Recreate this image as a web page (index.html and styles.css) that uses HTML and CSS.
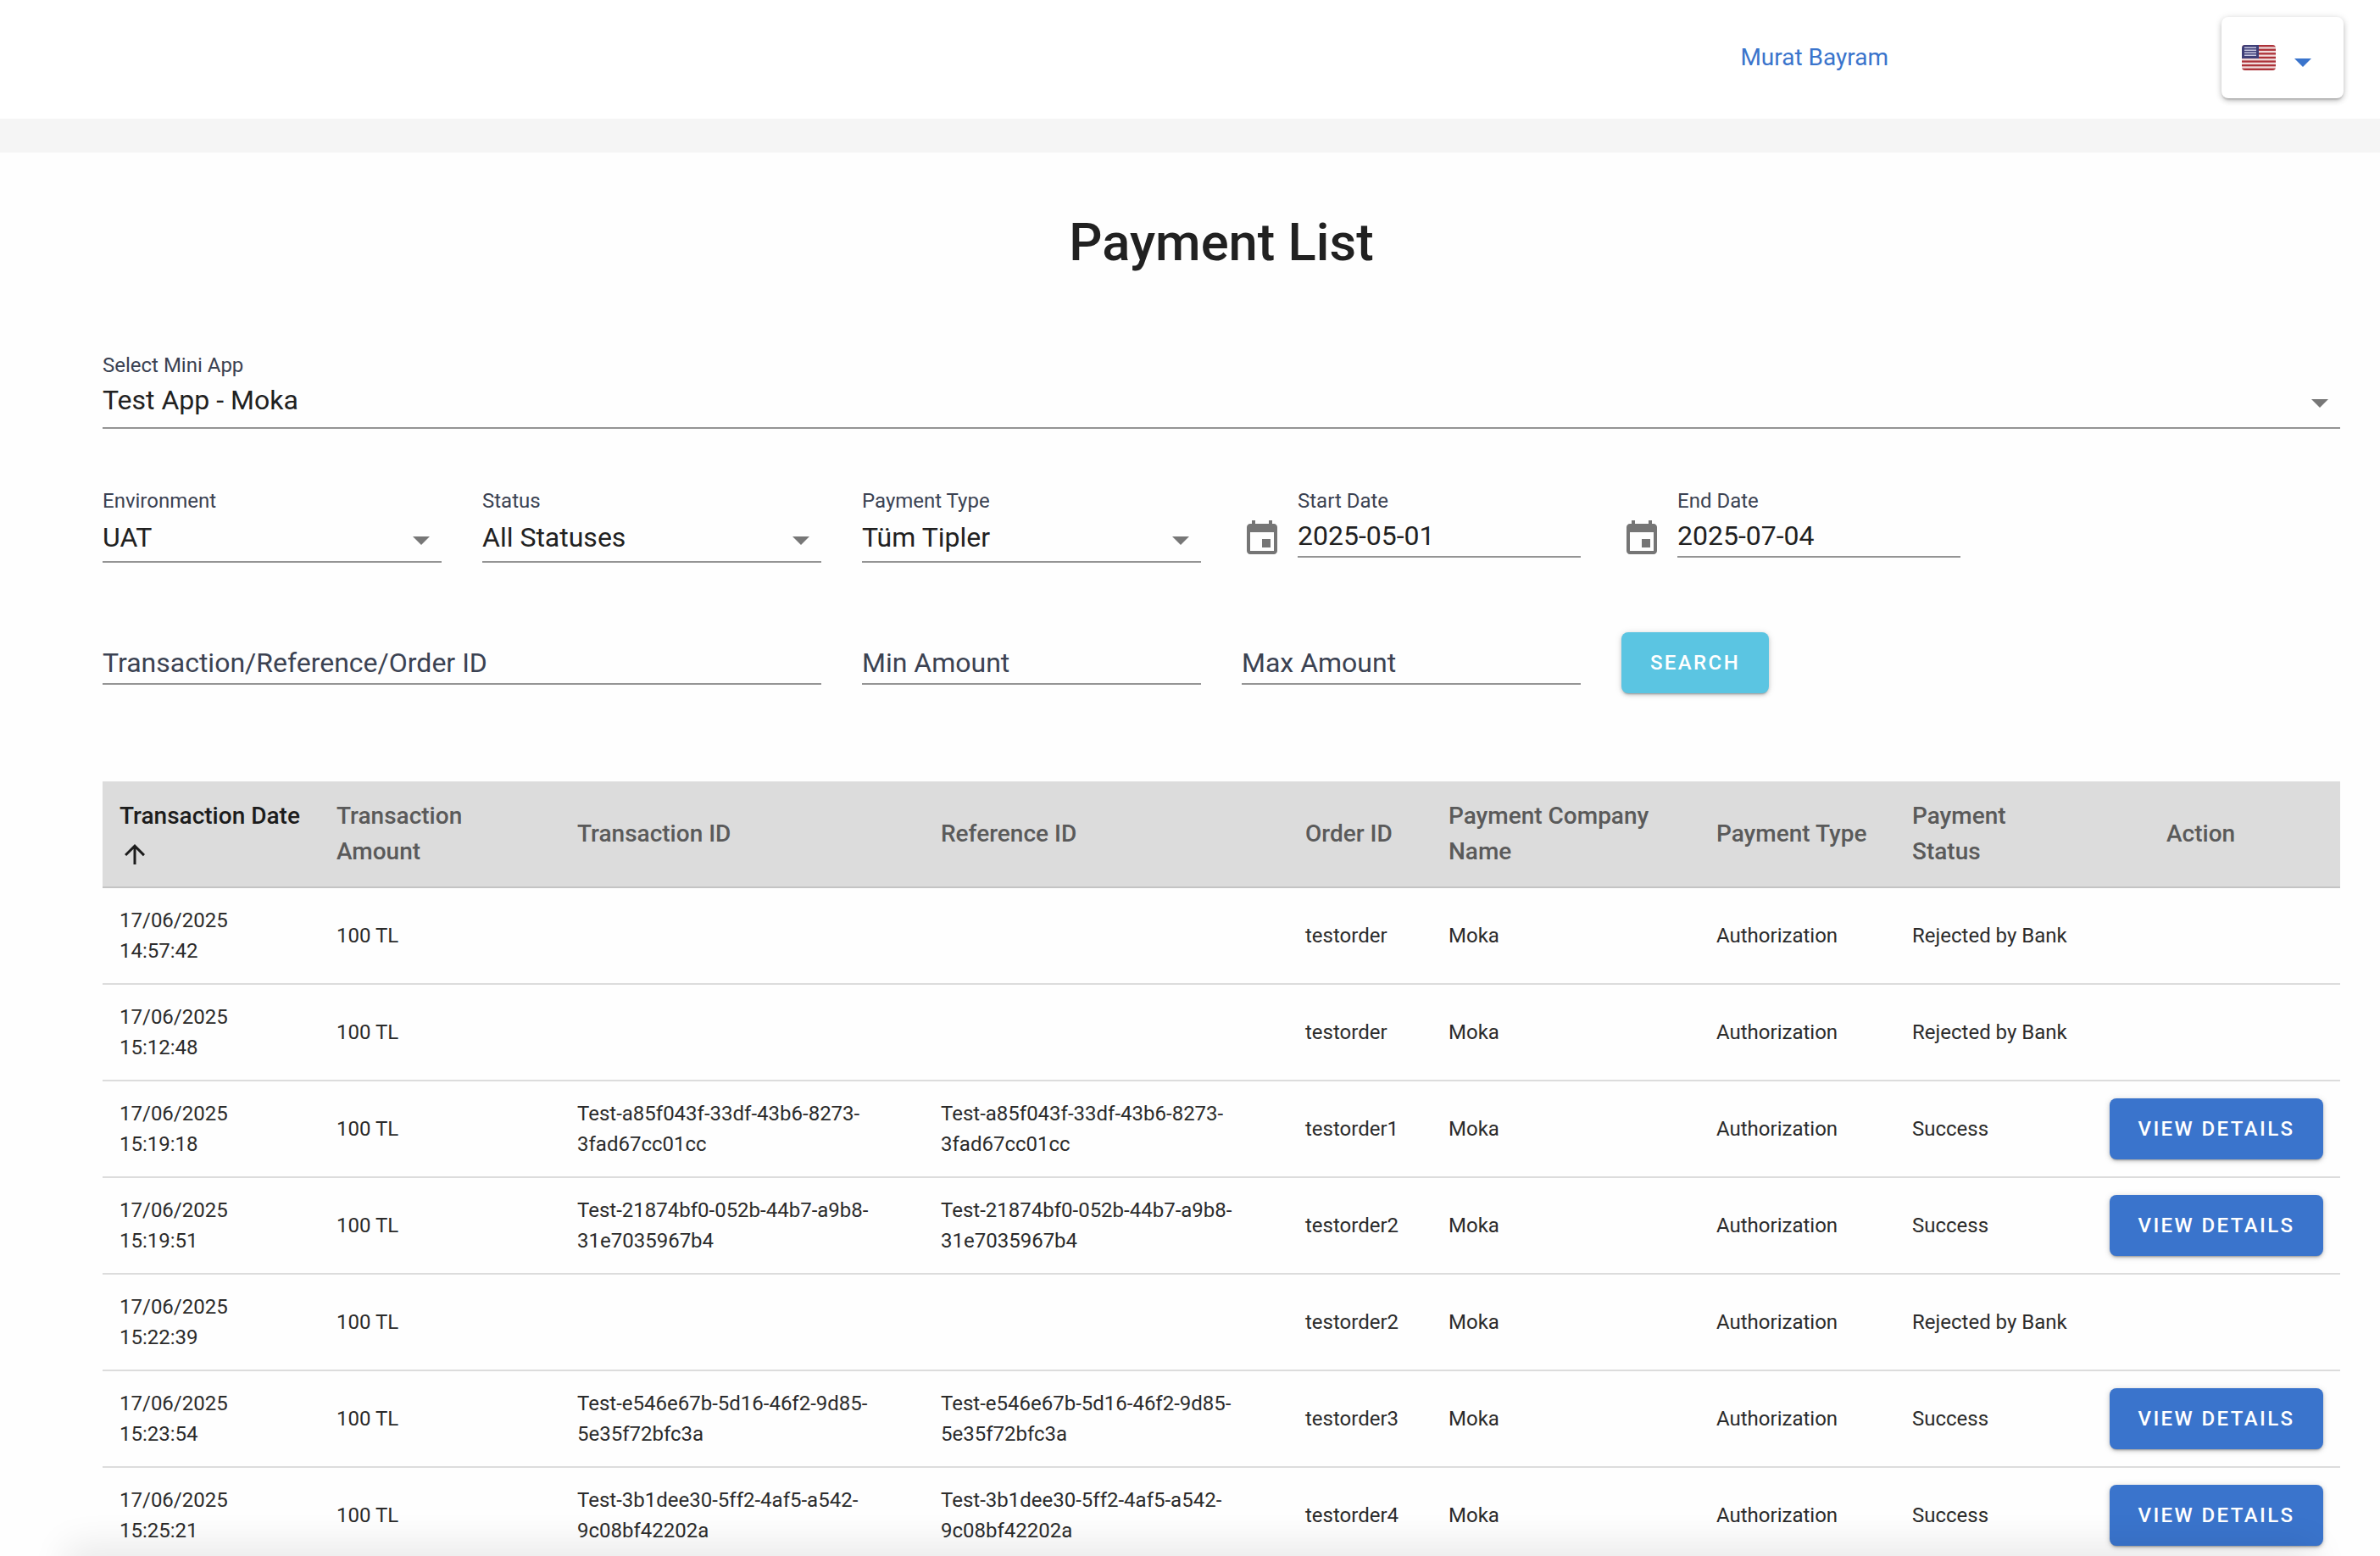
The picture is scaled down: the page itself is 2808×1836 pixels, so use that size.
FILE: index.html
```html
<!DOCTYPE html>
<html lang="en">
<head>
<meta charset="utf-8">
<title>Payment List</title>
<link rel="stylesheet" href="styles.css">
</head>
<body>
<header class="topbar">
  <a class="user-name">Murat Bayram</a>
  <div class="lang-card">
    <svg class="flag" viewBox="0 0 40 30" aria-hidden="true">
      <defs><clipPath id="flagclip"><rect y="0" width="40" height="30" rx="4"/></clipPath></defs>
      <g clip-path="url(#flagclip)">
        <rect width="40" height="30" fill="#f0dcdc"/>
        <g fill="#ad3239">
          <rect y="0" width="40" height="2.300"/><rect y="4.600" width="40" height="2.300"/><rect y="9.200" width="40" height="2.300"/><rect y="13.800" width="40" height="2.300"/><rect y="18.400" width="40" height="2.300"/><rect y="23" width="40" height="2.300"/><rect y="27.600" width="40" height="2.400"/>
        </g>
        <rect width="20" height="16" fill="#3f3f78"/>
        <g fill="#c8c8e0">
          <rect x="3" y="2.500" width="14" height="1.500"/><rect x="3" y="5.500" width="14" height="1.500"/><rect x="3" y="8.500" width="14" height="1.500"/><rect x="3" y="11.500" width="14" height="1.500"/>
        </g>
      </g>
    </svg>
    <svg class="lang-caret" viewBox="0 0 20 10" aria-hidden="true"><path d="M0 0h20L10 10z"/></svg>
  </div>
</header>
<div class="band"></div>
<main class="content">
  <h1 class="title">Payment List</h1>

  <div class="field field-app">
    <label class="lbl">Select Mini App</label>
    <div class="select-value"><span>Test App - Moka</span><svg class="caret" viewBox="0 0 20 10"><path d="M0 0h20L10 10z"/></svg></div>
  </div>

  <div class="filters">
    <div class="field"><label class="lbl">Environment</label><div class="select-value"><span>UAT</span><svg class="caret" viewBox="0 0 20 10"><path d="M0 0h20L10 10z"/></svg></div></div>
    <div class="field"><label class="lbl">Status</label><div class="select-value"><span>All Statuses</span><svg class="caret" viewBox="0 0 20 10"><path d="M0 0h20L10 10z"/></svg></div></div>
    <div class="field"><label class="lbl">Payment Type</label><div class="select-value"><span>Tüm Tipler</span><svg class="caret" viewBox="0 0 20 10"><path d="M0 0h20L10 10z"/></svg></div></div>
    <div class="date-field">
      <svg class="cal" viewBox="3 1 18 20"><path d="M17 12h-5v5h5v-5zM16 1v2H8V1H6v2H5c-1.110 0-1.990.9-1.990 2L3 19c0 1.100.89 2 2 2h14c1.100 0 2-.9 2-2V5c0-1.100-.9-2-2-2h-1V1h-2zm3 18H5V8h14v11z"/></svg>
      <div class="field date-input"><label class="lbl">Start Date</label><div class="date-value">2025-05-01</div></div>
    </div>
    <div class="date-field">
      <svg class="cal" viewBox="3 1 18 20"><path d="M17 12h-5v5h5v-5zM16 1v2H8V1H6v2H5c-1.110 0-1.990.9-1.990 2L3 19c0 1.100.89 2 2 2h14c1.100 0 2-.9 2-2V5c0-1.100-.9-2-2-2h-1V1h-2zm3 18H5V8h14v11z"/></svg>
      <div class="field date-input"><label class="lbl">End Date</label><div class="date-value">2025-07-04</div></div>
    </div>
  </div>

  <div class="search-row">
    <div class="text-input">Transaction/Reference/Order ID</div>
    <div class="text-input">Min Amount</div>
    <div class="text-input">Max Amount</div>
    <button class="btn btn-search">SEARCH</button>
  </div>

  <table class="grid">
    <colgroup>
      <col class="c1"><col class="c2"><col class="c3"><col class="c4"><col class="c5"><col class="c6"><col class="c7"><col class="c8"><col class="c9">
    </colgroup>
    <thead>
      <tr>
        <th class="sorted">Transaction Date<svg class="arrow" viewBox="0 0 24 24"><path d="M4 12l1.410 1.410L11 7.830V20h2V7.830l5.580 5.590L20 12l-8-8-8 8z"/></svg></th>
        <th>Transaction Amount</th>
        <th>Transaction ID</th>
        <th>Reference ID</th>
        <th>Order ID</th>
        <th>Payment Company Name</th>
        <th>Payment Type</th>
        <th>Payment Status</th>
        <th class="action-head">Action</th>
      </tr>
    </thead>
    <tbody>
      <tr><td>17/06/2025<br>14:57:42</td><td>100 TL</td><td></td><td></td><td>testorder</td><td>Moka</td><td>Authorization</td><td>Rejected by Bank</td><td></td></tr>
      <tr><td>17/06/2025<br>15:12:48</td><td>100 TL</td><td></td><td></td><td>testorder</td><td>Moka</td><td>Authorization</td><td>Rejected by Bank</td><td></td></tr>
      <tr><td>17/06/2025<br>15:19:18</td><td>100 TL</td><td>Test-a85f043f-33df-43b6-8273-<br>3fad67cc01cc</td><td>Test-a85f043f-33df-43b6-8273-<br>3fad67cc01cc</td><td>testorder1</td><td>Moka</td><td>Authorization</td><td>Success</td><td><button class="btn btn-view">VIEW DETAILS</button></td></tr>
      <tr><td>17/06/2025<br>15:19:51</td><td>100 TL</td><td>Test-21874bf0-052b-44b7-a9b8-<br>31e7035967b4</td><td>Test-21874bf0-052b-44b7-a9b8-<br>31e7035967b4</td><td>testorder2</td><td>Moka</td><td>Authorization</td><td>Success</td><td><button class="btn btn-view">VIEW DETAILS</button></td></tr>
      <tr><td>17/06/2025<br>15:22:39</td><td>100 TL</td><td></td><td></td><td>testorder2</td><td>Moka</td><td>Authorization</td><td>Rejected by Bank</td><td></td></tr>
      <tr><td>17/06/2025<br>15:23:54</td><td>100 TL</td><td>Test-e546e67b-5d16-46f2-9d85-<br>5e35f72bfc3a</td><td>Test-e546e67b-5d16-46f2-9d85-<br>5e35f72bfc3a</td><td>testorder3</td><td>Moka</td><td>Authorization</td><td>Success</td><td><button class="btn btn-view">VIEW DETAILS</button></td></tr>
      <tr><td>17/06/2025<br>15:25:21</td><td>100 TL</td><td>Test-3b1dee30-5ff2-4af5-a542-<br>9c08bf42202a</td><td>Test-3b1dee30-5ff2-4af5-a542-<br>9c08bf42202a</td><td>testorder4</td><td>Moka</td><td>Authorization</td><td>Success</td><td><button class="btn btn-view">VIEW DETAILS</button></td></tr>
    </tbody>
  </table>
</main>
<div class="bottom-fade"></div>
</body>
</html>
```
FILE: styles.css
```css
* { box-sizing: border-box; }
html, body { margin: 0; height: 100%; overflow: hidden; }
body {
  font-family: Roboto, "Liberation Sans", sans-serif;
  background: #fefefe;
  color: #1f1f1f;
  height: 1836px;
  position: relative;
}
.topbar {
  height: 140px;
  background: #fff;
  display: flex;
  align-items: flex-start;
  justify-content: flex-end;
  padding: 20px 43px 0 0;
}
.user-name {
  font-size: 28px;
  line-height: 36px;
  color: #3a74cc;
  margin: 30px 393px 0 0;
}
.lang-card {
  width: 144px;
  height: 96px;
  background: #fff;
  border-radius: 8px;
  box-shadow: 0 3px 3px -2px rgba(0,0,0,.3), 0 3px 6px 0 rgba(0,0,0,.16), 0 1px 10px 0 rgba(0,0,0,.12);
  display: flex;
  align-items: flex-start;
  padding: 33px 0 0 24px;
}
.flag { width: 40px; height: 30px; display: block; }
.lang-caret { width: 20px; height: 10px; margin: 16px 0 0 22px; fill: #3a74cc; }
.band { height: 40px; background: #f5f5f5; }
.content { padding: 0 47px 0 121px; }
.title {
  margin: 0;
  padding-top: 66px;
  height: 180px;
  text-align: center;
  font-size: 61.500px;
  line-height: 80px;
  font-weight: 500;
  color: #212121;
}
.field { display: flex; flex-direction: column; }
.lbl { font-size: 24px; line-height: 28px; color: #3b4252; }
.select-value {
  display: flex;
  align-items: center;
  justify-content: space-between;
  height: 59px;
  font-size: 32px;
  color: #212121;
  border-bottom: 2px solid #949494;
}
.field-app { margin-top: 57px; }
.field-app .select-value { height: 61px; padding-bottom: 5px; }
.caret { width: 20px; height: 10px; fill: #777; margin: 8px 14px 0 0; }
.filters {
  display: grid;
  grid-template-columns: repeat(5, 400px);
  column-gap: 48px;
  margin-top: 71px;
  align-items: start;
}
.date-field { display: flex; align-items: flex-start; gap: 24px; }
.cal { width: 36px; height: 40px; fill: #757575; flex: none; margin: 37px 0 0 6px; }
.date-input { flex: 1; }
.date-value {
  height: 53px;
  font-size: 32px;
  line-height: 54px;
  color: #212121;
  border-bottom: 2px solid #949494;
}
.search-row {
  display: grid;
  grid-template-columns: 848px 400px 400px 174px;
  column-gap: 48px;
  margin-top: 82px;
  align-items: start;
}
.text-input {
  height: 62px;
  font-size: 32px;
  line-height: 48px;
  padding-top: 12px;
  color: #3b4252;
  border-bottom: 2px solid #949494;
}
.btn {
  border: 0;
  border-radius: 8px;
  color: #fff;
  font-family: inherit;
  font-weight: 500;
  padding: 0;
  height: 72px;
  box-shadow: 0 3px 2px -2px rgba(0,0,0,.25), 0 2px 4px 0 rgba(0,0,0,.16), 0 1px 8px 0 rgba(0,0,0,.12);
}
.btn-search { background: #5bc5e2; font-size: 24px; letter-spacing: 2.400px; }
.btn-view { background: #3a74cc; width: 252px; font-size: 24px; letter-spacing: 2.400px; display: block; }
.grid {
  width: 100%;
  table-layout: fixed;
  border-collapse: collapse;
  margin-top: 104px;
}
.c1 { width: 256px; } .c2 { width: 284px; } .c3 { width: 429px; } .c4 { width: 430px; } .c5 { width: 169px; }
.c6 { width: 316px; } .c7 { width: 231px; } .c8 { width: 233px; } .c9 { width: 292px; }
th {
  background: #dcdcdc;
  border-bottom: 2px solid #c4c4c4;
  height: 125px;
  padding: 20px;
  text-align: left;
  font-size: 28px;
  line-height: 42px;
  font-weight: 500;
  color: #5a5a5a;
}
th.sorted { color: #1c1c1c; }
th.action-head { padding-left: 87px; }
.arrow { width: 36px; height: 36px; display: block; margin: 6px 0 0 0; fill: #1c1c1c; }
td {
  height: 114px;
  padding: 0 20px;
  font-size: 24px;
  line-height: 36px;
  color: #2b2b2b;
  border-bottom: 2px solid #dcdcdc;
  vertical-align: middle;
}
.bottom-fade {
  position: fixed;
  left: 90px;
  right: 90px;
  bottom: -24px;
  height: 24px;
  box-shadow: 0 0 44px 12px rgba(0,0,0,.09);
  pointer-events: none;
}
```
